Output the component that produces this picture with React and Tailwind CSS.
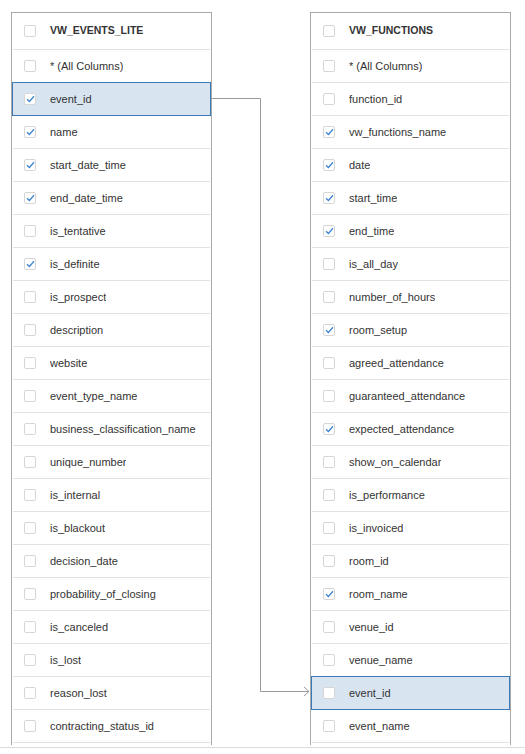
import React from 'react';

const eventsLite = [
  ['event_id', true],
  ['name', true],
  ['start_date_time', true],
  ['end_date_time', true],
  ['is_tentative', false],
  ['is_definite', true],
  ['is_prospect', false],
  ['description', false],
  ['website', false],
  ['event_type_name', false],
  ['business_classification_name', false],
  ['unique_number', false],
  ['is_internal', false],
  ['is_blackout', false],
  ['decision_date', false],
  ['probability_of_closing', false],
  ['is_canceled', false],
  ['is_lost', false],
  ['reason_lost', false],
  ['contracting_status_id', false],
];

const functions = [
  ['function_id', false],
  ['vw_functions_name', true],
  ['date', true],
  ['start_time', true],
  ['end_time', true],
  ['is_all_day', false],
  ['number_of_hours', false],
  ['room_setup', true],
  ['agreed_attendance', false],
  ['guaranteed_attendance', false],
  ['expected_attendance', true],
  ['show_on_calendar', false],
  ['is_performance', false],
  ['is_invoiced', false],
  ['room_id', false],
  ['room_name', true],
  ['venue_id', false],
  ['venue_name', false],
  ['event_id', false],
  ['event_name', false],
];

function Checkbox({ checked }) {
  return (
    <span className="flex h-[12px] w-[12px] shrink-0 items-center justify-center rounded-[2px] border border-[#d6d6d6] bg-white">
      {checked && (
        <svg width="9" height="8" viewBox="0 0 9 8" fill="none">
          <path d="M1 4.2 L3.4 6.5 L8 1.2" stroke="#3f86d1" strokeWidth="1.3" />
        </svg>
      )}
    </span>
  );
}

function Row({ label, checked, active }) {
  if (active) {
    return (
      <div className="-mx-[1px] -mt-[1px] flex h-[34px] items-center border border-[#3a7ab9] bg-[#d8e4f0] pl-[11px] text-[11px] text-[#333]">
        <Checkbox checked={checked} />
        <span className="ml-[14px] truncate">{label}</span>
      </div>
    );
  }
  return (
    <div className="flex h-[33px] items-center border-b border-[#e2e2e2] pl-[11px] text-[11px] text-[#333]">
      <Checkbox checked={checked} />
      <span className="ml-[14px] truncate">{label}</span>
    </div>
  );
}

function TablePanel({ title, columns, activeColumn }) {
  return (
    <div className="w-[201px] shrink-0 border border-[#a9a9a9] bg-white px-[1px]">
      <div className="flex h-[37px] items-center border-b border-[#e2e2e2] pl-[11px]">
        <Checkbox checked={false} />
        <span className="ml-[14px] text-[10.5px] font-bold text-[#333]">{title}</span>
      </div>
      <Row label="* (All Columns)" checked={false} />
      {columns.map(([name, checked]) => (
        <Row key={name} label={name} checked={checked} active={name === activeColumn} />
      ))}
      {/* list keeps scrolling below the fold */}
      <div className="h-[33px]" />
    </div>
  );
}

export default function App() {
  return (
    <div className="h-[754px] w-[525px] bg-white font-['Liberation_Sans',Arial,sans-serif]">
      <div className="relative h-[745px] overflow-hidden">
        <div className="flex gap-[98px] pl-[11px] pt-[12px]">
          <TablePanel title="VW_EVENTS_LITE" columns={eventsLite} activeColumn="event_id" />
          <TablePanel title="VW_FUNCTIONS" columns={functions} activeColumn="event_id" />
        </div>
        {/* join line: VW_EVENTS_LITE.event_id -> VW_FUNCTIONS.event_id */}
        <svg className="pointer-events-none absolute left-0 top-0" width="525" height="745">
          <path d="M212 98.5 H260.5 V691.5 H309" fill="none" stroke="#9a9a9a" strokeWidth="1" />
          <path d="M304 687 L309 691.5 L304 696" fill="none" stroke="#9a9a9a" strokeWidth="1" />
        </svg>
      </div>
      <div className="mt-[2px] border-b border-[#dcdcdc]" />
    </div>
  );
}
